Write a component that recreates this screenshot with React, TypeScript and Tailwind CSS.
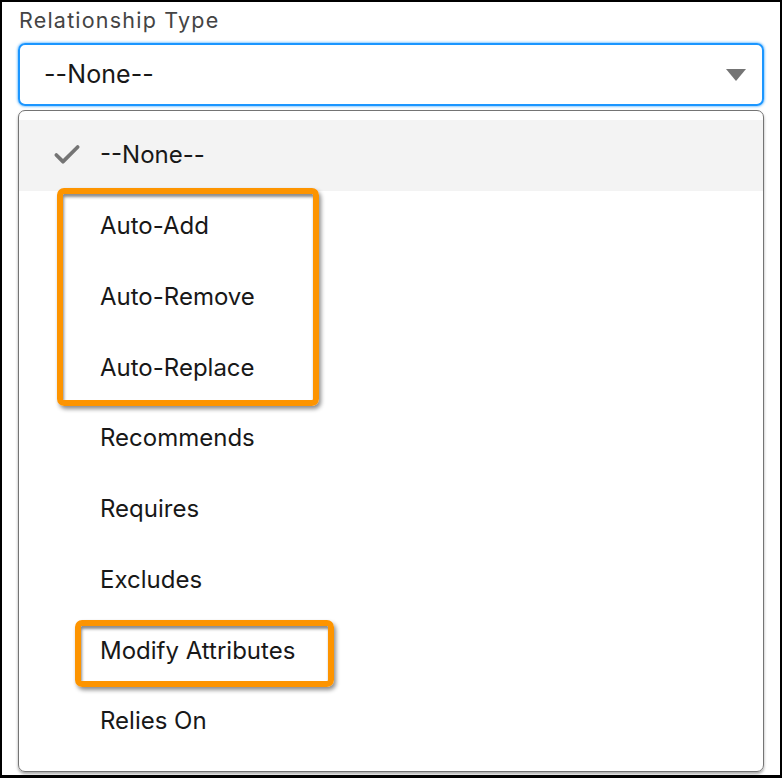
import { Check } from "lucide-react";

const options = [
  "--None--",
  "Auto-Add",
  "Auto-Remove",
  "Auto-Replace",
  "Recommends",
  "Requires",
  "Excludes",
  "Modify Attributes",
  "Relies On",
];

export default function App() {
  return (
    <div className="w-[782px] h-[778px] bg-black pt-[2px] px-[2px] pb-[3px] font-['Inter','Liberation_Sans',sans-serif]">
      <div className="h-full bg-white px-[16px] pt-[5px]">
        <div className="text-[21.5px] leading-[27px] text-[#444444] pl-[1px] tracking-[1.2px]">Relationship Type</div>

        {/* select trigger */}
        <div className="mt-[9px] h-[63px] flex items-center justify-between rounded-[7px] border-2 border-[#1b96ff] shadow-[0_0_3px_#1b96ff] pl-[24px] pr-[15px]">
          <span className="text-[25px] text-[#181818] tracking-[0.1px]">--None--</span>
          <svg width="22" height="14" viewBox="0 0 22 14">
            <path d="M1 1h20L11 13z" fill="#747474" />
          </svg>
        </div>

        {/* listbox */}
        <div className="relative mt-[4px] h-[662px] rounded-[7px] border-[1.5px] border-[#747474] shadow-[0_2px_3px_rgba(0,0,0,0.35)] pt-[9px]">
          {options.map((o, i) => (
            <div
              key={o}
              className={`h-[70.75px] flex items-center text-[24px] text-[#181818] ${i === 0 ? "bg-[#f3f3f3]" : ""}`}
            >
              <div className="w-[81px] flex justify-end pr-[17px]">
                {i === 0 && <Check size={32} strokeWidth={2.8} color="#747474" />}
              </div>
              <span>{o}</span>
            </div>
          ))}

          {/* highlight callouts */}
          <div className="absolute left-[38px] top-[77px] w-[262px] h-[218px] rounded-[7px] border-[6px] border-[#fd9400] shadow-[2px_3px_4px_rgba(0,0,0,0.45),inset_1px_3px_3px_rgba(0,0,0,0.45)]" />
          <div className="absolute left-[56px] top-[509px] w-[259px] h-[67px] rounded-[7px] border-[6px] border-[#fd9400] shadow-[2px_3px_4px_rgba(0,0,0,0.45),inset_1px_3px_3px_rgba(0,0,0,0.45)]" />
        </div>
      </div>
    </div>
  );
}
